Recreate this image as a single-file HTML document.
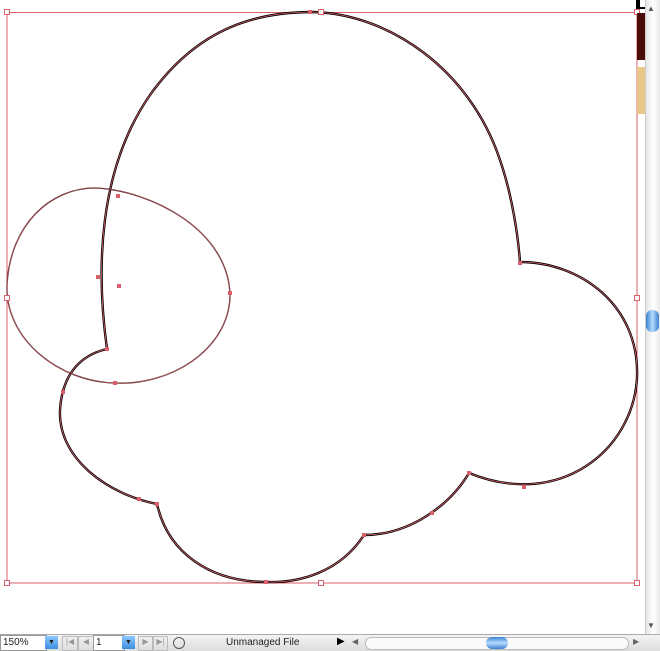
<!DOCTYPE html>
<html><head><style>
body{margin:0;width:660px;height:650px;overflow:hidden;background:#fff;font-family:"Liberation Sans",sans-serif;position:relative}
.abs{position:absolute}
</style></head><body>
<svg class="abs" style="left:0;top:0" width="660" height="650">
<rect x="7" y="12.5" width="630" height="570.5" fill="none" stroke="#d9606a" stroke-width="1"/>
<path d="M107,349 C96,270 98,170 150,95 C200,25 260,12 313,12 C390,14 470,70 500,160 C512,195 518,235 520,262 C580,262 640,305 637,378 C633,450 560,510 469,473 C450,505 410,535 364,535 C340,572 300,583 267,582 C210,582 168,553 157,504 C110,495 58,460 60,410 C62,375 80,355 107,349 Z" fill="none" stroke="#000" stroke-width="2.4"/>
<path d="M107,349 C96,270 98,170 150,95 C200,25 260,12 313,12 C390,14 470,70 500,160 C512,195 518,235 520,262 C580,262 640,305 637,378 C633,450 560,510 469,473 C450,505 410,535 364,535 C340,572 300,583 267,582 C210,582 168,553 157,504 C110,495 58,460 60,410 C62,375 80,355 107,349 Z" fill="none" stroke="#d9606a" stroke-width="0.8"/>
<path d="M7,285 C10,225 50,188 95,188 C150,190 230,230 230,297 C228,350 170,386 115,383 C60,382 5,340 7,285Z" fill="none" stroke="#2a1010" stroke-width="1.3"/>
<path d="M7,285 C10,225 50,188 95,188 C150,190 230,230 230,297 C228,350 170,386 115,383 C60,382 5,340 7,285Z" fill="none" stroke="#d9606a" stroke-width="0.6"/>
<g fill="#fff" stroke="#d9606a" stroke-width="1">
<rect x="4.5" y="9.5" width="5" height="5"/><rect x="318.5" y="9.5" width="5" height="5"/><rect x="634.5" y="9.5" width="5" height="5"/>
<rect x="4.5" y="295.5" width="5" height="5"/><rect x="634.5" y="295.5" width="5" height="5"/>
<rect x="4.5" y="580.5" width="5" height="5"/><rect x="318.5" y="580.5" width="5" height="5"/><rect x="634.5" y="580.5" width="5" height="5"/>
</g>
<g fill="#d9606a">
<rect x="117" y="284" width="4" height="4"/><rect x="105" y="347" width="4" height="4"/><rect x="61" y="390" width="4" height="4"/>
<rect x="113" y="381" width="4" height="4"/><rect x="228" y="291" width="4" height="4"/><rect x="116" y="194" width="4" height="4"/>
<rect x="96" y="275" width="4" height="4"/><rect x="518" y="261" width="4" height="4"/><rect x="467" y="471" width="4" height="4"/>
<rect x="522" y="485" width="4" height="4"/><rect x="430" y="511" width="4" height="4"/><rect x="362" y="533" width="4" height="4"/>
<rect x="155" y="502" width="4" height="4"/><rect x="137" y="497" width="4" height="4"/><rect x="264" y="580" width="4" height="4"/>
<rect x="308" y="10" width="4" height="4"/>
</g>
<rect x="637" y="13" width="8" height="47" fill="#4a0c08"/>
<rect x="637" y="67" width="8" height="47" fill="#e8c888"/>
<rect x="636" y="0" width="9" height="9" fill="#000"/><rect x="640" y="0" width="5" height="7" fill="#fff"/>
</svg>
<div class="abs" style="left:645px;top:0;width:15px;height:634px;background:linear-gradient(90deg,#e6e6e6,#fff 50%,#e6e6e6);border-left:1px solid #ccc"></div>
<div class="abs" style="left:647px;top:4px;font-size:8px;color:#555">▲</div>
<div class="abs" style="left:647px;top:621px;font-size:8px;color:#555">▼</div>
<div class="abs" style="left:646px;top:310px;width:13px;height:22px;border-radius:6px;background:linear-gradient(90deg,#3a7fd0,#b8dcff,#3a7fd0)"></div>
<div class="abs" style="left:0;top:634px;width:660px;height:16px;background:linear-gradient(#f4f4f4,#dcdcdc);border-top:1px solid #aaa;font-size:10px;color:#222">
<div class="abs" style="left:0;top:0;width:43px;height:14px;background:#fff;border:1px solid #999;line-height:14px;padding-left:2px">150%</div>
<div class="abs" style="left:45px;top:1px;width:13px;height:13px;background:linear-gradient(#8cc8ff,#3d8ee0);font-size:7px;text-align:center;line-height:13px">▼</div>
<div class="abs" style="left:62px;top:1px;width:14px;height:13px;border:1px solid #bbb;color:#999;font-size:8px;text-align:center">|◀</div>
<div class="abs" style="left:78px;top:1px;width:14px;height:13px;border:1px solid #bbb;color:#999;font-size:8px;text-align:center">◀</div>
<div class="abs" style="left:93px;top:0;width:28px;height:14px;background:#fff;border:1px solid #999;line-height:14px;padding-left:2px">1</div>
<div class="abs" style="left:122px;top:1px;width:13px;height:13px;background:linear-gradient(#8cc8ff,#3d8ee0);font-size:7px;text-align:center;line-height:13px">▼</div>
<div class="abs" style="left:138px;top:1px;width:13px;height:13px;border:1px solid #bbb;color:#999;font-size:8px;text-align:center">▶</div>
<div class="abs" style="left:153px;top:1px;width:13px;height:13px;border:1px solid #bbb;color:#999;font-size:8px;text-align:center">▶|</div>
<div class="abs" style="left:173px;top:2px;width:10px;height:10px;border:1px solid #555;border-radius:50%"></div>
<div class="abs" style="left:226px;top:2px">Unmanaged File</div>
<div class="abs" style="left:337px;top:1px;font-size:10px;color:#000">▶</div>
<div class="abs" style="left:352px;top:2px;font-size:8px;color:#666">◀</div>
<div class="abs" style="left:365px;top:2px;width:262px;height:11px;border:1px solid #bbb;border-radius:6px;background:#fafafa"></div>
<div class="abs" style="left:486px;top:2px;width:22px;height:12px;border-radius:6px;background:linear-gradient(#3a7fd0,#b8dcff,#3a7fd0)"></div>
<div class="abs" style="left:633px;top:2px;font-size:8px;color:#666">▶</div>
</div>
</body></html>
